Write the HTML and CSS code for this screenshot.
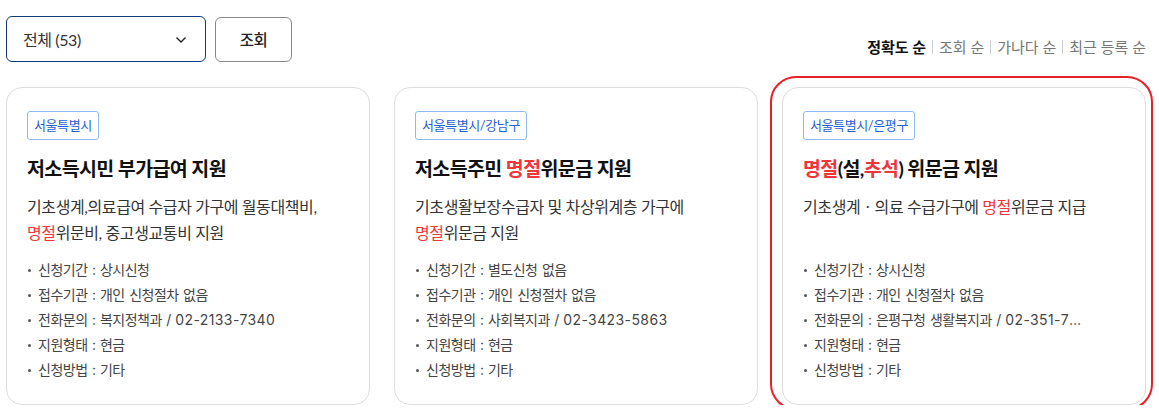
FILE: index.html
```html
<!DOCTYPE html>
<html lang="ko">
<head>
<meta charset="utf-8">
<link rel="stylesheet" href="styles.css">
</head>
<body>
<div class="page">
  <div class="toolbar">
    <div class="filters">
      <div class="select">
        <span>전체 (53)</span>
        <svg class="chev" width="12" height="8" viewBox="0 0 12 8"><path d="M1.5 1.5 L6 6 L10.5 1.5" fill="none" stroke="#222" stroke-width="1.4"/></svg>
      </div>
      <button class="btn">조회</button>
    </div>
    <div class="sort">
      <span class="on">정확도 순</span><i></i><span>조회 순</span><i></i><span>가나다 순</span><i></i><span>최근 등록 순</span>
    </div>
  </div>
  <div class="cards">
    <div class="card">
      <span class="tag">서울특별시</span>
      <h3 class="title">저소득시민 부가급여 지원</h3>
      <p class="desc">기초생계,의료급여 수급자 가구에 월동대책비,<br><em>명절</em>위문비, 중고생교통비 지원</p>
      <ul class="info">
        <li>신청기간 : 상시신청</li>
        <li>접수기관 : 개인 신청절차 없음</li>
        <li>전화문의 : 복지정책과 / <span class="tel">02-2133-7340</span></li>
        <li>지원형태 : 현금</li>
        <li>신청방법 : 기타</li>
      </ul>
    </div>
    <div class="card">
      <span class="tag">서울특별시/강남구</span>
      <h3 class="title">저소득주민 <em>명절</em>위문금 지원</h3>
      <p class="desc">기초생활보장수급자 및 차상위계층 가구에<br><em>명절</em>위문금 지원</p>
      <ul class="info">
        <li>신청기간 : 별도신청 없음</li>
        <li>접수기관 : 개인 신청절차 없음</li>
        <li>전화문의 : 사회복지과 / <span class="tel">02-3423-5863</span></li>
        <li>지원형태 : 현금</li>
        <li>신청방법 : 기타</li>
      </ul>
    </div>
    <div class="card focus">
      <span class="tag">서울특별시/은평구</span>
      <h3 class="title"><em>명절</em>(설,<em>추석</em>) 위문금 지원</h3>
      <p class="desc">기초생계ㆍ의료 수급가구에 <em>명절</em>위문금 지급</p>
      <ul class="info">
        <li>신청기간 : 상시신청</li>
        <li>접수기관 : 개인 신청절차 없음</li>
        <li class="ell">전화문의 : 은평구청 생활복지과 / <span class="tel">02-351-7123</span></li>
        <li>지원형태 : 현금</li>
        <li>신청방법 : 기타</li>
      </ul>
    </div>
  </div>
</div>
</body>
</html>
```
FILE: styles.css
```css
* { box-sizing: border-box; }
html, body { margin: 0; padding: 0; background: #fff; }
body {
  font-family: Lato, "Noto Sans CJK KR", sans-serif;
  color: #222;
  letter-spacing: -0.4px;
}
.page { padding: 16px 13px 0 6px; }
.toolbar {
  display: flex;
  justify-content: space-between;
  align-items: flex-end;
}
.filters { display: flex; gap: 9px; align-items: center; }
.select {
  width: 200px;
  height: 46px;
  border: 1px solid #0e3a78;
  border-radius: 6px;
  display: flex;
  align-items: center;
  justify-content: space-between;
  padding: 0 18px 0 16px;
  font-size: 16px;
  color: #333;
}
.chev { margin-top: 1px; }
.btn {
  width: 77px;
  height: 45px;
  border: 1px solid #888;
  border-radius: 6px;
  background: #fff;
  font-family: inherit;
  font-size: 15.5px;
  font-weight: 500;
  color: #222;
  letter-spacing: -0.4px;
}
.sort {
  display: flex;
  align-items: center;
  font-size: 15px;
  line-height: 20px;
  color: #777;
  margin-bottom: 5px;
  letter-spacing: 0;
}
.sort span.on { color: #111; font-weight: 700; }
.sort i {
  display: block;
  width: 1px;
  height: 14px;
  background: #ccc;
  margin: 0 6px;
}
.cards {
  display: flex;
  gap: 24px;
  margin-top: 25px;
}
.card {
  position: relative;
  width: 364px;
  height: 318px;
  border: 1px solid #ddd;
  border-radius: 16px;
  padding: 23px 20px 0 20px;
}
.card.focus::after {
  content: "";
  position: absolute;
  left: -13px; top: -12px; right: -8px; bottom: -6px;
  border: 2px solid #e8202a;
  border-radius: 26px;
  pointer-events: none;
}
.tag {
  display: inline-block;
  height: 29px;
  line-height: 27px;
  padding: 0 6px;
  border: 1px solid #8fb9ef;
  border-radius: 3px;
  font-size: 13px;
  color: #1f5fd6;
}
.title {
  margin: 15px 0 0;
  font-size: 19.5px;
  font-weight: 700;
  color: #111;
  line-height: 28px;
  letter-spacing: -0.6px;
}
em { font-style: normal; color: #f0353b; }
.desc {
  margin: 11px 0 0;
  font-size: 16px;
  line-height: 26px;
  color: #333;
  min-height: 52px;
}
.info {
  list-style: none;
  margin: 11px 0 0;
  padding: 0;
  font-family: Inter, "Noto Sans CJK KR", sans-serif;
  font-size: 14px;
  line-height: 25px;
  letter-spacing: -0.5px;
  word-spacing: 1px;
  color: #444;
}
.info .tel { letter-spacing: 0.4px; }
.info li {
  position: relative;
  padding-left: 11px;
  white-space: nowrap;
}
.info li::before {
  content: "";
  position: absolute;
  left: 1px; top: 12px;
  width: 3px; height: 3px;
  border-radius: 50%;
  background: #555;
}
.info li.ell {
  overflow: hidden;
  text-overflow: ellipsis;
  max-width: 284px;
}
```
